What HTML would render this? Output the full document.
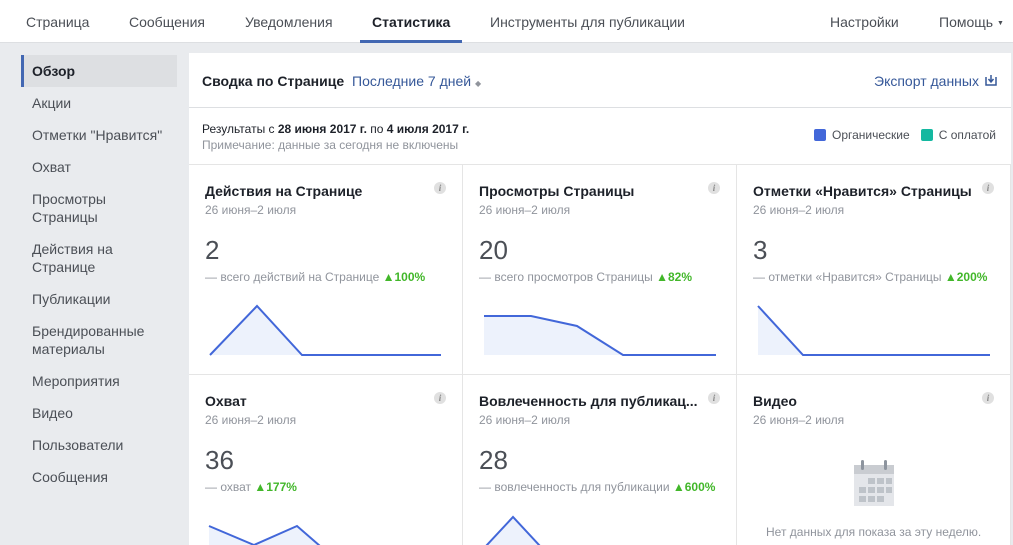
<!DOCTYPE html><html><head><meta charset="utf-8"><style>
*{margin:0;padding:0;box-sizing:border-box}
html,body{width:1013px;height:545px;overflow:hidden}
body{background:#e9ebee;font-family:"Liberation Sans",sans-serif;position:relative;color:#1d2129}
.a{position:absolute;white-space:nowrap}
.nav{position:absolute;left:0;top:0;width:1013px;height:43px;background:#fff;border-bottom:1px solid #dddfe2}
.nav span{position:absolute;top:14px;font-size:14px;color:#4b4f56}
.side{font-size:14px;color:#4b4f56;left:32px;line-height:18px}
.panel{position:absolute;left:189px;top:53px;width:822px;height:492px;background:#fff;overflow:hidden}
.card{position:absolute;border-right:1px solid #e5e5e5;border-bottom:1px solid #e5e5e5;width:274px;height:210px}
.t{position:absolute;left:16px;top:18px;font-size:14px;font-weight:bold;color:#1d2129}
.d{position:absolute;left:16px;top:38px;font-size:12px;color:#90949c}
.n{position:absolute;left:16px;top:70px;font-size:26px;color:#4b4f56}
.s{position:absolute;left:16px;top:105px;font-size:12px;color:#90949c;white-space:nowrap}
.s b{color:#42b72a}
.i{position:absolute;right:16px;top:17px;width:12px;height:12px;border-radius:50%;background:#e0e0e0;color:#888;font-size:9px;font-style:italic;font-family:"Liberation Serif",serif;text-align:center;line-height:12px;font-weight:bold}
</style></head><body>
<div class="nav">
<span style="left:26px">Страница</span>
<span style="left:129px">Сообщения</span>
<span style="left:245px">Уведомления</span>
<span style="left:372px;color:#1d2129;font-weight:bold">Статистика</span>
<span style="left:490px">Инструменты для публикации</span>
<span style="left:830px">Настройки</span>
<span style="left:939px">Помощь <small style="font-size:7px;vertical-align:2px">▼</small></span>
<div style="position:absolute;left:360px;top:40px;width:102px;height:3px;background:#4267b2"></div>
</div>
<div class="a" style="left:21px;top:55px;width:156px;height:32px;background:#dddfe2;border-left:3px solid #4267b2"></div>
<div class="a side" style="top:62px;color:#1d2129;font-weight:bold">Обзор</div>
<div class="a side" style="top:94px">Акции</div>
<div class="a side" style="top:126px">Отметки "Нравится"</div>
<div class="a side" style="top:158px">Охват</div>
<div class="a side" style="top:190px">Просмотры<br>Страницы</div>
<div class="a side" style="top:240px">Действия на<br>Странице</div>
<div class="a side" style="top:290px">Публикации</div>
<div class="a side" style="top:322px">Брендированные<br>материалы</div>
<div class="a side" style="top:372px">Мероприятия</div>
<div class="a side" style="top:404px">Видео</div>
<div class="a side" style="top:436px">Пользователи</div>
<div class="a side" style="top:468px">Сообщения</div>
<div class="panel">
<div class="a" style="left:13px;top:20px;font-size:14px;font-weight:bold">Сводка по Странице <span style="font-weight:normal;color:#365899;margin-left:4px">Последние 7 дней <small style="font-size:8px;color:#90949c">◆</small></span></div>
<div class="a" style="left:685px;top:20px;font-size:14px;color:#365899">Экспорт данных</div>
<svg class="a" style="left:796px;top:21px" width="12" height="12"><path d="M1 3v8h10V3" fill="none" stroke="#365899" stroke-width="1.5"/><path d="M6 1v6M3.5 5L6 8 8.5 5" fill="none" stroke="#365899" stroke-width="1.5"/></svg>
<div class="a" style="left:0;top:54px;width:822px;height:1px;background:#dddfe2"></div>
<div class="a" style="left:13px;top:69px;font-size:12px">Результаты с <b>28 июня 2017 г.</b> по <b>4 июля 2017 г.</b></div>
<div class="a" style="left:13px;top:85px;font-size:12px;color:#90949c">Примечание: данные за сегодня не включены</div>
<div class="a" style="left:625px;top:75px;font-size:12px;color:#4b4f56"><span style="display:inline-block;width:12px;height:12px;background:#4267d9;border-radius:2px;vertical-align:-2px;margin-right:6px"></span>Органические<span style="display:inline-block;width:12px;height:12px;background:#14b8a0;border-radius:2px;vertical-align:-2px;margin:0 6px 0 11px"></span>С оплатой</div>
<div class="a" style="left:0;top:111px;width:822px;height:1px;background:#e5e5e5"></div>
<div class="card" style="left:0;top:112px"><div class="t">Действия на Странице</div><div class="i">i</div><div class="d">26 июня–2 июля</div><div class="n">2</div><div class="s">— всего действий на Странице <b>▲100%</b></div></div>
<div class="card" style="left:274px;top:112px"><div class="t">Просмотры Страницы</div><div class="i">i</div><div class="d">26 июня–2 июля</div><div class="n">20</div><div class="s">— всего просмотров Страницы <b>▲82%</b></div></div>
<div class="card" style="left:548px;top:112px"><div class="t">Отметки «Нравится» Страницы</div><div class="i">i</div><div class="d">26 июня–2 июля</div><div class="n">3</div><div class="s">— отметки «Нравится» Страницы <b>▲200%</b></div></div>
<div class="card" style="left:0;top:322px"><div class="t">Охват</div><div class="i">i</div><div class="d">26 июня–2 июля</div><div class="n">36</div><div class="s">— охват <b>▲177%</b></div></div>
<div class="card" style="left:274px;top:322px"><div class="t">Вовлеченность для публикац...</div><div class="i">i</div><div class="d">26 июня–2 июля</div><div class="n">28</div><div class="s">— вовлеченность для публикации <b>▲600%</b></div></div>
<div class="card" style="left:548px;top:322px"><div class="t">Видео</div><div class="i">i</div><div class="d">26 июня–2 июля</div>
<div class="a" style="left:29px;top:150px;font-size:12px;color:#90949c">Нет данных для показа за эту неделю.</div></div>
</div>
<svg class="a" style="left:0;top:0" width="1013" height="545">
<g fill="#edf2fc" stroke="#4267d9" stroke-width="2" stroke-linejoin="miter">
<polygon points="210,355 257,306 302,355 441,355" stroke="none"/>
<polyline fill="none" points="210,355 257,306 302,355 441,355"/>
<polygon points="484,355 484,316 531,316 577,326 623,355 716,355" stroke="none"/>
<polyline fill="none" points="484,316 531,316 577,326 623,355 716,355"/>
<polygon points="758,355 758,306 803,355 990,355" stroke="none"/>
<polyline fill="none" points="758,306 803,355 990,355"/>
<polygon points="209,546 209,526 254,545 297,526 320,546" stroke="none"/>
<polyline fill="none" points="209,526 254,545 297,526 320,546"/>
<polygon points="486,546 513,517 540,546" stroke="none"/>
<polyline fill="none" points="486,546 513,517 540,546"/>
</g>
<g>
<rect x="854" y="465" width="40" height="41" fill="#e4e6ea"/>
<rect x="854" y="465" width="40" height="9" fill="#c9ccd1"/>
<rect x="861" y="460" width="3" height="10" rx="1.5" fill="#8d949e"/>
<rect x="884" y="460" width="3" height="10" rx="1.5" fill="#8d949e"/>
<g fill="#bec3c9">
<rect x="868" y="478" width="7" height="6"/><rect x="877" y="478" width="7" height="6"/><rect x="886" y="478" width="6" height="6"/>
<rect x="859" y="487" width="7" height="6"/><rect x="868" y="487" width="7" height="6"/><rect x="877" y="487" width="7" height="6"/><rect x="886" y="487" width="6" height="6"/>
<rect x="859" y="496" width="7" height="6"/><rect x="868" y="496" width="7" height="6"/><rect x="877" y="496" width="7" height="6"/>
</g></g>
</svg>
</body></html>
